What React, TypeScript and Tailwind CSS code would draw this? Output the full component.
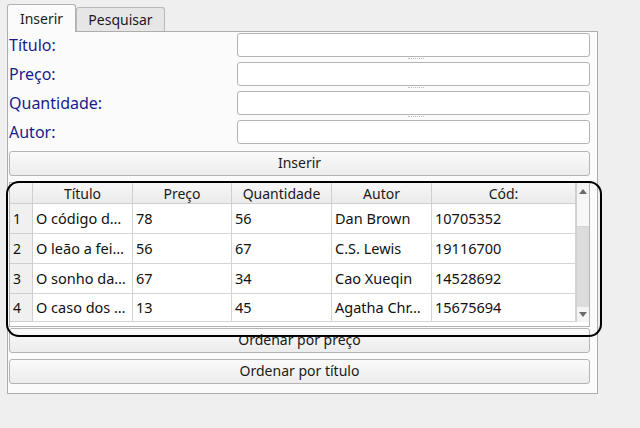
import React from 'react';

const font = { fontFamily: '"Noto Sans", "Open Sans", sans-serif' };

const rows = [
  { n: 1, titulo: 'O código d…', preco: '78', qtd: '56', autor: 'Dan Brown', cod: '10705352' },
  { n: 2, titulo: 'O leão a fei…', preco: '56', qtd: '67', autor: 'C.S. Lewis', cod: '19116700' },
  { n: 3, titulo: 'O sonho da…', preco: '67', qtd: '34', autor: 'Cao Xueqin', cod: '14528692' },
  { n: 4, titulo: 'O caso dos …', preco: '13', qtd: '45', autor: 'Agatha Chr…', cod: '15675694' },
];

const labels = ['Título:', 'Preço:', 'Quantidade:', 'Autor:'];

const Button = ({ label, className = '' }: { label: string; className?: string }) => (
  <button className={`block h-[25px] w-[581px] rounded-[3px] border border-[#b4b4b4] bg-gradient-to-b from-[#fafafa] to-[#ececec] text-[14px] text-[#1a1a1a] leading-none pb-px ${className}`}>
    {label}
  </button>
);

const HeaderCell = ({ label, w }: { label: string; w: string }) => (
  <div className={`${w} h-full flex items-center justify-center border-r border-b border-[#cfcfcf] bg-gradient-to-b from-[#f7f7f7] to-[#ebebeb] text-[14px] text-[#1a1a1a]`}>
    {label}
  </div>
);

const Cell = ({ v, w }: { v: string; w: string }) => (
  <div className={`${w} h-full flex items-center pl-[3px] border-r border-b border-[#d4d4d4] text-[14.5px] text-[#111] whitespace-nowrap overflow-hidden`}>
    {v}
  </div>
);

export default function App() {
  return (
    <div className="relative w-[640px] h-[428px] bg-[#efefef] overflow-hidden pl-[7px] pt-[4px]" style={font}>
      {/* tabs */}
      <div className="flex items-end h-[27px]">
        <div className="h-[28px] w-[69px] -mb-px z-10 flex items-center justify-center rounded-t-[3px] border border-b-0 border-[#b0b0b0] bg-[#fbfbfb] text-[14px] text-[#1a1a1a]">
          Inserir
        </div>
        <div className="h-[24px] w-[89px] flex items-center justify-center rounded-t-[3px] border border-b-0 border-[#b8b8b8] bg-[#e6e6e6] text-[14px] text-[#1a1a1a]">
          Pesquisar
        </div>
      </div>

      {/* pane */}
      <div className="w-[591px] h-[363px] border border-[#adadad] bg-[#fbfbfb] pl-px pt-px flex flex-col">
        <div className="flex flex-col gap-[5px]">
          {labels.map((l, i) => (
            <div key={l} className="flex items-center h-[24px]">
              <div className="w-[228px] text-[16px] text-[#1a1a8c]">{l}</div>
              <div className="relative w-[353px] h-[24px] rounded-[3px] border border-[#b4b4b4] bg-white">
                {/* splitter handle */}
                {i < 3 && (
                  <div className="absolute left-[170px] -bottom-[3px] w-[16px] border-t border-dotted border-[#bdbdbd]" />
                )}
              </div>
            </div>
          ))}
        </div>

        <Button label="Inserir" className="mt-[7px]" />

        {/* table */}
        <div className="mt-[6px] w-[581px] h-[145px] border border-[#b4b4b4] bg-white flex">
          <div className="flex flex-col w-[566px]">
            <div className="flex h-[21px]">
              <div className="w-[23px] h-full border-r border-b border-[#cfcfcf] bg-gradient-to-b from-[#f7f7f7] to-[#ebebeb]" />
              <HeaderCell label="Título" w="w-[100px]" />
              <HeaderCell label="Preço" w="w-[99px]" />
              <HeaderCell label="Quantidade" w="w-[100px]" />
              <HeaderCell label="Autor" w="w-[100px]" />
              <HeaderCell label="Cód:" w="w-[144px]" />
            </div>
            {rows.map((r, i) => (
              <div key={r.n} className={`flex ${i === 3 ? 'h-[28px]' : 'h-[30px]'}`}>
                <div className="w-[23px] h-full flex items-center pl-[3px] border-r border-b border-[#cfcfcf] bg-[#f0f0f0] text-[14px] text-[#111]">
                  {r.n}
                </div>
                <Cell v={r.titulo} w="w-[100px]" />
                <Cell v={r.preco} w="w-[99px]" />
                <Cell v={r.qtd} w="w-[100px]" />
                <Cell v={r.autor} w="w-[100px]" />
                <Cell v={r.cod} w="w-[144px]" />
              </div>
            ))}
          </div>
          {/* scrollbar */}
          <div className="w-[14px] h-[139px] flex flex-col border-l border-[#d0d0d0] bg-[#f4f4f4]">
            <div className="h-[16px] flex items-center justify-center">
              <svg width="8" height="5" viewBox="0 0 8 5"><path d="M0 5 L4 0 L8 5 Z" fill="#6a6a6a" /></svg>
            </div>
            <div className="h-[28px] bg-[#f7f7f7] border-b border-[#d6d6d6]" />
            <div className="flex-1 bg-[#dcdcdc]" />
            <div className="h-[15px] flex items-center justify-center bg-[#f4f4f4]">
              <svg width="8" height="5" viewBox="0 0 8 5"><path d="M0 0 L4 5 L8 0 Z" fill="#6a6a6a" /></svg>
            </div>
          </div>
        </div>

        <Button label="Ordenar por preço" className="mt-px" />
        <Button label="Ordenar por título" className="mt-[6px]" />
      </div>

      {/* annotation outline over the table */}
      <div className="absolute left-[6px] top-[181px] w-[596px] h-[156px] rounded-[13px] border-2 border-black pointer-events-none" />
    </div>
  );
}
